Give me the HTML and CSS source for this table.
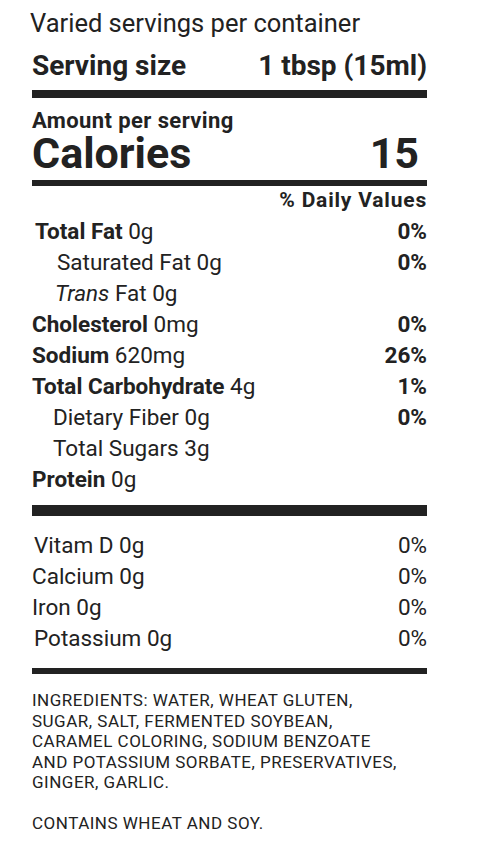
FILE: index.html
```html
<!DOCTYPE html>
<html lang="en">
<head>
  <meta charset="utf-8" />
  <title>Nutrition Facts</title>
  <link rel="stylesheet" href="styles.css">
</head>
<body>

<div class="label">
  <div class="servings">Varied servings per container</div>
  <div class="serving-size">
    <span>Serving size</span>
    <span>1 tbsp (15ml)</span>
  </div>
  <div class="bar bar-thick"></div>

  <div class="amount">Amount per serving</div>
  <div class="calories">
    <span>Calories</span>
    <span class="cal-num">15</span>
  </div>
  <div class="bar bar-med"></div>

  <div class="dv-head">% Daily Values</div>

  <ul class="nutrients">
    <li class="in-3"><span><b>Total Fat</b> 0g</span><b>0%</b></li>
    <li class="in-25"><span>Saturated Fat 0g</span><b>0%</b></li>
    <li class="in-23"><span><i>Trans</i> Fat 0g</span></li>
    <li><span><b>Cholesterol</b> 0mg</span><b>0%</b></li>
    <li><span><b>Sodium</b> 620mg</span><b>26%</b></li>
    <li><span><b>Total Carbohydrate</b> 4g</span><b>1%</b></li>
    <li class="in-21"><span>Dietary Fiber 0g</span><b>0%</b></li>
    <li class="in-21"><span>Total Sugars 3g</span></li>
    <li><span><b>Protein</b> 0g</span></li>
  </ul>
  <div class="bar bar-heavy"></div>

  <ul class="vitamins">
    <li class="in-2"><span>Vitam D 0g</span><span>0%</span></li>
    <li><span>Calcium 0g</span><span>0%</span></li>
    <li><span>Iron 0g</span><span>0%</span></li>
    <li class="in-2"><span>Potassium 0g</span><span>0%</span></li>
  </ul>
  <div class="bar bar-med"></div>

  <p class="ingredients">INGREDIENTS: WATER, WHEAT GLUTEN,<br>SUGAR, SALT, FERMENTED SOYBEAN,<br>CARAMEL COLORING, SODIUM BENZOATE<br>AND POTASSIUM SORBATE, PRESERVATIVES,<br>GINGER, GARLIC.</p>
  <p class="ingredients contains">CONTAINS WHEAT AND SOY.</p>
</div>

</body>
</html>
```

FILE: styles.css
```css
body {
  margin: 0;
  background: #fff;
  color: #222;
  font-family: Roboto, "Liberation Sans", sans-serif;
}

.label {
  width: 395px;
  margin-left: 32px;
  padding-top: 8px;
}

.servings {
  font-size: 25.5px;
  line-height: 30px;
  margin-left: -2px;
}

.serving-size {
  display: flex;
  justify-content: space-between;
  font-size: 28px;
  line-height: 30px;
  font-weight: 700;
  margin-top: 13px;
}

.bar {
  background: #222;
}

.bar-thick {
  height: 8px;
  margin-top: 9px;
}

.bar-med {
  height: 6px;
}

.bar-heavy {
  height: 11px;
  margin-top: 10px;
}

.amount {
  font-size: 22px;
  line-height: 22px;
  font-weight: 700;
  letter-spacing: 0.4px;
  margin-top: 12px;
}

.calories {
  display: flex;
  justify-content: space-between;
  font-size: 43px;
  line-height: 40px;
  font-weight: 700;
  margin-top: 1px;
  margin-bottom: 7px;
}

.cal-num {
  padding-right: 8px;
}

.dv-head {
  text-align: right;
  font-size: 21px;
  line-height: 24px;
  font-weight: 700;
  letter-spacing: 0.8px;
  margin-top: 2px;
}

.nutrients,
.vitamins {
  list-style: none;
  margin: 4px 0 0;
  padding: 0;
}

.nutrients li,
.vitamins li {
  display: flex;
  justify-content: space-between;
  height: 31px;
  font-size: 22.5px;
  line-height: 31px;
}

.vitamins {
  margin: 14px 0 14px;
}

.in-2 { padding-left: 2px; }
.in-3 { padding-left: 3px; }
.in-21 { padding-left: 21px; }
.in-23 { padding-left: 23px; }
.in-25 { padding-left: 25px; }

.ingredients {
  margin: 16px 0 0;
  font-size: 17px;
  line-height: 20.5px;
  letter-spacing: 0.5px;
}

.ingredients.contains {
  margin-top: 20.5px;
}
```
